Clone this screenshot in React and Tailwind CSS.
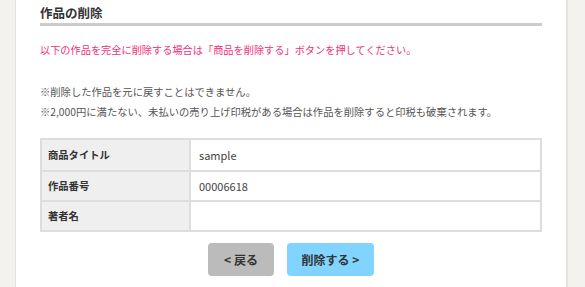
import React from 'react';

const rows = [
  { label: '商品タイトル', value: 'sample' },
  { label: '作品番号', value: '00006618' },
  { label: '著者名', value: '' },
];

const App = () => {
  return (
    <div
      className="flex h-[287px] w-[585px] overflow-hidden bg-[#f3f2ee]"
      style={{ fontFamily: '"Noto Sans CJK JP", "Noto Sans", sans-serif' }}
    >
      <div className="ml-[15px] w-[553px] shrink-0 border-l border-r-2 border-[#e4e2dd] bg-white px-[24px]">
        <h2 className="border-b-[3px] border-[#cccccc] pt-[5px] pb-[2px] text-[12.5px] font-bold leading-[16px] text-[#333]">
          作品の削除
        </h2>

        <p className="mt-[16px] text-[10.2px] leading-[16px] text-[#f0307c]">
          以下の作品を完全に削除する場合は「商品を削除する」ボタンを押してください。
        </p>

        <div className="mt-[24px] text-[10.3px] leading-[20px] text-[#555]">
          <p>※削除した作品を元に戻すことはできません。</p>
          <p>※2,000円に満たない、未払いの売り上げ印税がある場合は作品を削除すると印税も破棄されます。</p>
        </div>

        <div className="mt-[16px] border-2 border-[#dddddd] text-[10.3px] text-[#333]">
          {rows.map((row, i) => (
            <div key={row.label} className={`flex h-[30px] ${i > 0 ? 'border-t-2 border-[#dddddd]' : ''}`}>
              <div className="flex w-[149px] items-center border-r-2 border-[#dddddd] bg-[#efefef] pl-[6px] font-bold">
                {row.label}
              </div>
              <div className="flex flex-1 items-center pl-[8px] text-[11px] text-[#444]">{row.value}</div>
            </div>
          ))}
        </div>

        <div className="mt-[11px] flex justify-center gap-[13px]">
          <button className="h-[33px] w-[66px] rounded-[4px] bg-[#bbbbbb] text-[12px] font-bold text-[#333]">
            &lt; 戻る
          </button>
          <button className="h-[33px] w-[87px] rounded-[4px] bg-[#80d4ff] text-[12px] font-bold text-[#333]">
            削除する &gt;
          </button>
        </div>
      </div>
    </div>
  );
};

export default App;
